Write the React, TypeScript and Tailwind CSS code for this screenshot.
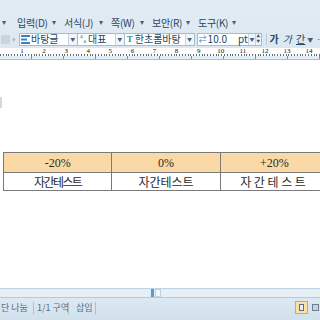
import React from 'react';

const kr = { fontFamily: '"Noto Sans CJK KR", "Noto Sans", sans-serif' };
const serif = { fontFamily: '"Liberation Serif", "Noto Sans CJK KR", serif' };

const menus = [
  { label: '입력(D)', w: 'w-[47px]' },
  { label: '서식(J)', w: 'w-[47px]' },
  { label: '쪽(W)', w: 'w-[41px]' },
  { label: '보안(R)', w: 'w-[46px]' },
  { label: '도구(K)', w: 'w-[46px]' },
];

const DropBtn = () => (
  <div className="ml-auto flex h-full w-[9px] items-center justify-center border-l border-[#c4d4e2] bg-[#f2f6fa]">
    <span className="text-[5px] text-[#4a5f74]">▼</span>
  </div>
);

const MenuBar = () => (
  <div className="flex h-[16px] items-center pl-[2px] text-[10px] text-[#2a4562]" style={kr}>
    <span className="w-[15px] text-[8px] text-[#4a5f74]">▾</span>
    {menus.map((m) => (
      <div key={m.label} className={`flex items-center ${m.w}`}>
        <span className="tracking-[-0.3px]">{m.label}</span>
        <span className="ml-auto mr-[8px] text-[8px] text-[#4a5f74]">▾</span>
      </div>
    ))}
  </div>
);

const Toolbar = () => (
  <div className="flex h-[16px] items-center text-[10px] text-[#2a4562]" style={kr}>
    <div className="flex w-[19px] items-center gap-[2px] pl-[1px]">
      <div className="h-[9px] w-[9px] rounded-[1px] bg-[#c9d3dc]" />
      <span className="text-[7px] text-[#a9b5c1]">▾</span>
    </div>
    <div className="flex h-[13px] w-[59px] items-center border border-[#a3bcd2] bg-white">
      <svg width="9" height="9" viewBox="0 0 9 9" className="ml-[1px]">
        <rect x="0" y="0" width="9" height="2" fill="#3f7fc4" />
        <rect x="0" y="3.5" width="6" height="2" fill="#3f7fc4" />
        <rect x="0" y="7" width="9" height="2" fill="#3f7fc4" />
      </svg>
      <span className="ml-[1px] text-[10px] leading-none">바탕글</span>
      <DropBtn />
    </div>
    <div className="flex h-[13px] w-[47px] items-center border border-l-0 border-[#a3bcd2] bg-white">
      <span className="ml-[2px] text-[8px] leading-none text-[#3f7fc4]">⁴ₐ</span>
      <span className="ml-[2px] text-[10px] leading-none">대표</span>
      <DropBtn />
    </div>
    <div className="flex h-[13px] w-[70px] items-center border border-l-0 border-[#a3bcd2] bg-white">
      <span className="ml-[2px] text-[9px] font-bold leading-none text-[#2f8f86]" style={serif}>T</span>
      <span className="ml-[2px] text-[10px] leading-none">한초롬바탕</span>
      <DropBtn />
    </div>
    <div className="ml-[2px] flex h-[13px] w-[65px] items-center border border-[#a3bcd2] bg-white">
      <span className="ml-[1px] text-[8px] leading-none text-[#3f7fc4]">⇄</span>
      <span className="ml-[1px] text-[10px] leading-none">10.0</span>
      <span className="ml-[11px] text-[10px] leading-none">pt</span>
      <DropBtn />
      <div className="flex h-full w-[7px] flex-col items-center justify-center border-l border-[#c4d4e2] bg-[#f2f6fa] text-[4px] leading-[5px] text-[#4a5f74]">
        <span>▲</span>
        <span>▼</span>
      </div>
    </div>
    <div className="ml-[4px] mr-[3px] h-[12px] w-px bg-[#b9cada]" />
    <span className="text-[10px] font-bold leading-none">가</span>
    <span className="ml-[4px] text-[10px] italic leading-none">가</span>
    <span className="ml-[4px] text-[10px] leading-none underline">간</span>
    <span className="ml-[2px] text-[6px] text-[#4a5f74]">▼</span>
    <span className="ml-[4px] text-[8px] text-[#4a5f74]">-</span>
  </div>
);

const Ruler = () => (
  <div className="flex h-[12px] flex-col border-b border-[#9ec3dc] bg-white">
    <div className="flex h-[6px] items-end pl-[11px] text-[7px] leading-[6px] text-[#111]" style={serif}>
      {Array.from({ length: 14 }, (_, i) => (
        <span key={i} className="w-[22.2px] text-center">{i + 1}</span>
      ))}
    </div>
    <div className="h-[2px] bg-[repeating-linear-gradient(90deg,#6b6b6b_0px,#6b6b6b_1px,transparent_1px,transparent_2.8px)]" />
    <div className="h-[3px] bg-[#e3eff7] bg-[repeating-linear-gradient(90deg,transparent_0px,transparent_31px,#5b9ac6_31px,#5b9ac6_32px)]" />
  </div>
);

const Document = () => (
  <div className="relative flex-1 overflow-hidden bg-white">
    <div className="absolute left-0 top-[37px] h-[11px] w-[2px] bg-[#d6d6d6]" />
    <div className="mt-[92px] ml-[3px] w-[326px]">
      <table className="w-full border-collapse text-[12px] text-[#2a2a2a]">
        <tbody>
          <tr className="h-[20px] bg-[#fad9a6]">
            {['-20%', '0%', '+20%'].map((t) => (
              <td key={t} className="w-[108px] border border-[#7a7a7a] text-center leading-none" style={serif}>
                {t}
              </td>
            ))}
          </tr>
          <tr className="h-[18px]" style={kr}>
            <td className="border border-[#7a7a7a] text-center leading-none tracking-[-1.6px]">자간테스트</td>
            <td className="border border-[#7a7a7a] text-center leading-none">자간테스트</td>
            <td className="border border-[#7a7a7a] text-center leading-none tracking-[2.6px]">자간테스트</td>
          </tr>
        </tbody>
      </table>
    </div>
  </div>
);

const ScrollRow = () => (
  <div className="flex h-[9px] items-center border-t border-[#bfd2e2] bg-[#e6eff6]">
    <div className="ml-[151px] h-[8px] w-[3px] bg-[#5b9ac6]" />
    <div className="ml-[1px] h-[8px] w-[6px] border border-[#bfd2e2] bg-[#f3f7fb]" />
  </div>
);

const StatusBar = () => (
  <div className="flex h-[20px] items-center border-t border-[#b6cadb] bg-[linear-gradient(#dde9f2,#d2e2ed)] text-[9px] text-[#5a6d80]" style={kr}>
    <span className="w-[33px] whitespace-nowrap pl-[1px]">단 나눔</span>
    <div className="h-[12px] w-px bg-[#a9bfd2]" />
    <span className="w-[34px] whitespace-nowrap pl-[3px]">1/1 구역</span>
    <div className="h-[12px] w-px bg-[#a9bfd2]" />
    <span className="w-[26px] whitespace-nowrap pl-[7px]">삽입</span>
    <div className="h-[12px] w-px bg-[#a9bfd2]" />
    <div className="ml-auto mr-[4px] flex h-[13px] w-[13px] items-center justify-center border border-[#d4aa4f] bg-[#f9e2a4]">
      <div className="h-[7px] w-[5px] border border-[#5c6f82] bg-[#e8eef4]" />
    </div>
    <div className="flex h-[13px] w-[8px] items-center justify-start">
      <div className="h-[7px] w-[7px] border border-[#6b7f93] bg-[#c7d4e0]" />
    </div>
  </div>
);

export default function App() {
  return (
    <div className="flex h-[320px] w-[320px] flex-col overflow-hidden bg-white">
      <div className="bg-[linear-gradient(#e2ecf3,#dce8f1)]">
        <div className="h-[14px]" />
        <MenuBar />
        <div className="h-[1px]" />
        <Toolbar />
        <div className="h-[1px]" />
      </div>
      <Ruler />
      <Document />
      <ScrollRow />
      <StatusBar />
      <div className="h-[3px] bg-[#d2e2ed]" />
    </div>
  );
}
